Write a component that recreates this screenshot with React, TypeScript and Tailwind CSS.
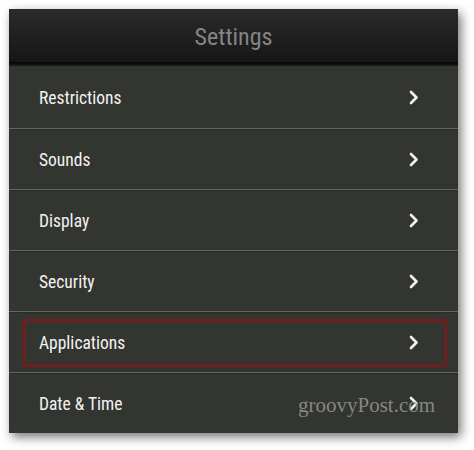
import React from "react";

const items = ["Restrictions", "Sounds", "Display", "Security", "Applications", "Date & Time"];

function Chevron() {
  return (
    <svg width="10" height="15" viewBox="0 0 10 15" className="shrink-0">
      <path d="M2 2 L7.5 7.5 L2 13" fill="none" stroke="#f4f4f4" strokeWidth="2.6" strokeLinecap="round" strokeLinejoin="round" />
    </svg>
  );
}

export default function App() {
  return (
    <div className="w-[474px] h-[450px] bg-white pt-[9px] pl-[9px]">
      <div
        className="w-[449px] bg-[#323530] shadow-[3px_4px_10px_rgba(0,0,0,0.55)]"
        style={{ fontFamily: '"Roboto Condensed", "Liberation Sans Narrow", Roboto, sans-serif' }}
      >
        <div className="h-[53px] flex items-center justify-center bg-gradient-to-b from-[#2b2b2b] to-[#161616]">
          <span className="text-[24px] text-[#858585] mt-[2px]">Settings</span>
        </div>
        <div className="h-[4px] bg-gradient-to-b from-[#050505] to-[#1c1f1b]" />
        {items.map((label, i) => (
          <div
            key={label}
            className={`relative flex items-center pl-[30px] pr-[39px] ${
              i === 0 ? "h-[62px]" : "h-[61px] border-t border-[#62675f] shadow-[inset_0_1px_0_#2a2c28]"
            }`}
          >
            <span className="flex-1 text-[17.5px] text-[#f2f2f2] pt-[2px]">{label}</span>
            <Chevron />
            {label === "Applications" && (
              <div className="absolute left-[14px] right-[11px] top-[7px] bottom-[5px] border-[3px] border-[#711e1e]" />
            )}
            {label === "Date & Time" && (
              <span
                className="absolute left-[289px] top-[17px] text-[21px] text-[#8f918c] opacity-90"
                style={{ fontFamily: '"Liberation Serif", serif' }}
              >
                groovyPost.com
              </span>
            )}
          </div>
        ))}
      </div>
    </div>
  );
}
